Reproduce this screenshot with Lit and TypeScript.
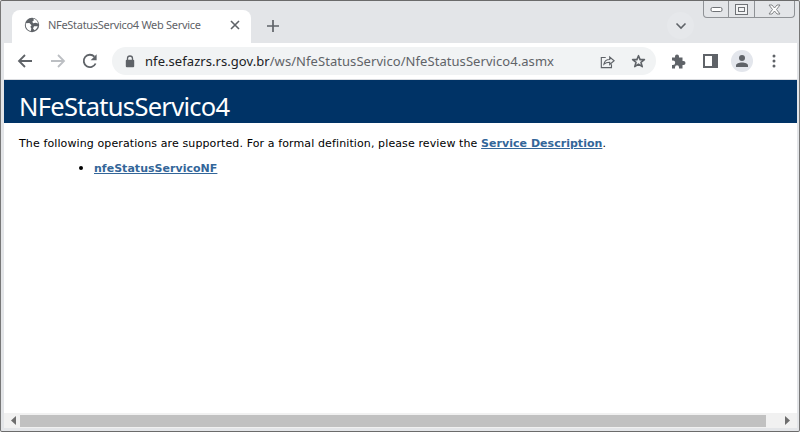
import { LitElement, html, css } from 'lit';
import { customElement } from 'lit/decorators.js';

@customElement('app-root')
export class AppRoot extends LitElement {
  static styles = css`
    :host {
      display: block;
      width: 800px;
      height: 432px;
      font-family: 'Noto Sans', sans-serif;
      overflow: hidden;
    }

    .window {
      position: relative;
      box-sizing: border-box;
      width: 800px;
      height: 432px;
      display: flex;
      flex-direction: column;
      background: #e3e5e8;
      border-top: 1px solid #6b6b6b;
      border-left: 1px solid #777;
      border-right: 1px solid #777;
      border-bottom: 1px solid #6b6b6b;
      border-radius: 2px;
      padding: 0 2px 3px 2px;
    }

    .strip {
      height: 42px;
      flex: none;
      display: flex;
      align-items: flex-end;
      background: #e3e5e8;
      padding-left: 9px;
    }

    .tab {
      width: 239px;
      height: 33px;
      box-sizing: border-box;
      display: flex;
      align-items: center;
      padding: 0 10px 4px 12px;
      background: #fff;
      border-radius: 8px 8px 0 0;
      color: #5f6368;
      font-size: 11px;
      flex: none;
    }

    .tab .label {
      margin-left: 8px;
      flex: 1;
      letter-spacing: -0.3px;
      white-space: nowrap;
    }

    .plus {
      margin-left: 15px;
      margin-bottom: 10px;
      display: flex;
    }

    .chevron {
      width: 27px;
      height: 27px;
      border-radius: 50%;
      background: #e6e8eb;
      margin-left: auto;
      margin-right: 103px;
      margin-bottom: 4px;
      display: flex;
      align-items: center;
      justify-content: center;
    }

    .toolbar {
      height: 36px;
      flex: none;
      display: flex;
      align-items: center;
      padding-left: 13px;
      background: #fff;
      border-bottom: 1px solid #dadce0;
      margin-left: 1px;
    }

    .nav {
      display: flex;
      gap: 17px;
      align-items: center;
    }

    .nav svg:last-child {
      margin-left: -1px;
    }

    .omnibox {
      margin-left: 14px;
      width: 544px;
      height: 28px;
      box-sizing: border-box;
      border-radius: 14px;
      background: #f1f3f4;
      display: flex;
      align-items: center;
      padding: 0 10px 0 13px;
      font-size: 13px;
      color: #5f6368;
      white-space: nowrap;
    }

    .omnibox .host {
      color: #202124;
    }

    .url {
      margin-left: 10px;
      letter-spacing: 0.06px;
    }

    .omni-icons {
      margin-left: auto;
      display: flex;
      gap: 16px;
      align-items: center;
    }

    .actions {
      display: flex;
      align-items: center;
      margin-left: 15px;
    }

    .panel-icon {
      margin-left: 16px;
    }

    .avatar {
      width: 22px;
      height: 22px;
      border-radius: 50%;
      background: #e3e6ec;
      display: flex;
      align-items: center;
      justify-content: center;
      margin: 0 19px 0 13px;
    }

    .page {
      flex: 1;
      min-height: 0;
      margin-left: 1px;
      display: flex;
      flex-direction: column;
      background: #fff;
    }

    .heading {
      height: 43px;
      flex: none;
      box-sizing: border-box;
      background: #003366;
      color: #fff;
      font-family: 'Noto Sans', sans-serif;
      font-size: 25.5px;
      line-height: 43px;
      padding: 5px 0 0 15px;
      letter-spacing: -0.7px;
      white-space: nowrap;
    }

    .body {
      flex: 1;
      padding: 13px 0 0 15px;
      font-family: 'DejaVu Sans', Verdana, sans-serif;
      font-size: 11px;
      line-height: 15px;
      color: #000;
      letter-spacing: 0.112px;
    }

    .body a {
      color: #336699;
      font-weight: bold;
      text-decoration: underline;
      letter-spacing: 0.03px;
    }

    ul {
      margin: 0;
      padding: 9px 0 0 75px;
      list-style: disc;
    }

    li::marker {
      font-size: 13px;
    }

    .scrollbar {
      height: 15px;
      flex: none;
      display: flex;
      align-items: center;
      background: #f1f1f1;
      padding: 0 7px;
    }

    .thumb {
      height: 12px;
      flex: 1;
      background: #c1c1c1;
      margin: 0 19px 0 4px;
    }

    .controls {
      position: absolute;
      top: 0;
      right: 4px;
      height: 17px;
      width: 92px;
      box-sizing: border-box;
      display: flex;
      border: 1px solid #8f9296;
      border-top: none;
      border-radius: 0 0 4px 4px;
    }

    .controls div {
      display: flex;
      align-items: center;
      justify-content: center;
      border-left: 1px solid #8f9296;
    }

    .controls div:first-child {
      border-left: none;
    }

    .ctl-min {
      width: 24px;
    }

    .ctl-max {
      width: 25px;
    }

    .ctl-close {
      flex: 1;
    }
  `;

  render() {
    return html`
      <div class="window">
        <div class="strip">
          <div class="tab">
            <svg width="16" height="16" viewBox="0 0 16 16">
              <circle cx="8" cy="8" r="7.200" fill="#5f6368" />
              <path
                d="M1.800 6.200 5.400 6l2.100 2.300-1.100 1.500.9 1.700-.5 2.500C4 13.600 1.800 11 1.800 8zM9.300 1.600l.6 1.700-1.700 1.500 1 1.400 2.300-.5 2.600.8c-.5-2.400-2.300-4.300-4.800-4.900zM10 9.300h3.700c-.4 1.700-1.500 3.100-3.100 3.900L9 11.500z"
                fill="#fff"
              />
            </svg>
            <span class="label">NFeStatusServico4 Web Service</span>
            <svg width="12" height="12" viewBox="0 0 12 12">
              <path d="M2 2l8 8M10 2l-8 8" stroke="#5f6368" stroke-width="1.600" />
            </svg>
          </div>
          <div class="plus">
            <svg width="14" height="14" viewBox="0 0 14 14">
              <path d="M7 1v12M1 7h12" stroke="#5f6368" stroke-width="1.700" />
            </svg>
          </div>
          <div class="chevron">
            <svg width="12" height="8" viewBox="0 0 12 8">
              <path d="M1.500 1.500 6 6l4.500-4.500" fill="none" stroke="#5f6368" stroke-width="1.600" />
            </svg>
          </div>
        </div>

        <div class="toolbar">
          <div class="nav">
            <svg width="16" height="16" viewBox="0 0 16 16">
              <path d="M15 8H2M8 2 2 8l6 6" fill="none" stroke="#5f6368" stroke-width="1.800" />
            </svg>
            <svg width="16" height="16" viewBox="0 0 16 16">
              <path d="M1 8h13M8 2l6 6-6 6" fill="none" stroke="#bcbfc3" stroke-width="1.800" />
            </svg>
            <svg width="16" height="16" viewBox="0 0 16 16">
              <path d="M13.600 10.500A6.200 6.200 0 1 1 12.400 3.600" fill="none" stroke="#5f6368" stroke-width="1.800" />
              <path d="M14.600 1.200v6h-6z" fill="#5f6368" />
            </svg>
          </div>
          <div class="omnibox">
            <svg width="10" height="13" viewBox="0 0 10 13">
              <path d="M2.500 5V3.500a2.500 2.500 0 0 1 5 0V5" fill="none" stroke="#5f6368" stroke-width="1.300" />
              <rect x="0.800" y="4.800" width="8.400" height="7.400" rx="1" fill="#5f6368" />
            </svg>
            <span class="url"><span class="host">nfe.sefazrs.rs.gov.br</span>/ws/NfeStatusServico/NfeStatusServico4.asmx</span>
            <div class="omni-icons">
              <svg width="15" height="15" viewBox="0 0 17 17">
                <path d="M6.500 4H1.500v11.500h11.500v-4" fill="none" stroke="#5f6368" stroke-width="1.300" />
                <path d="M4.500 11.500c.5-3.500 3-5.300 6.500-5.300V3.500l5 4.200-5 4.200V9.300c-3 0-5 .6-6.500 2.200z" fill="none" stroke="#5f6368" stroke-width="1.300" />
              </svg>
              <svg width="15" height="15" viewBox="0 0 16 16">
                <path d="M8 1.800 9.700 6h4.600l-3.700 2.900 1.400 4.600L8 10.800l-4 2.700 1.400-4.600L1.700 6h4.600z" fill="none" stroke="#5f6368" stroke-width="1.700" stroke-linejoin="round" />
              </svg>
            </div>
          </div>
          <div class="actions">
            <svg width="16" height="16" viewBox="0 0 16 16">
              <path d="M6 1.500a2 2 0 0 1 2 2V4.500h3.500V8h1a2 2 0 1 1 0 4h-1v3.500H8v-1.200a2 2 0 1 0-4 0v1.200H1V12h1a2.200 2.200 0 1 0 0-4.400H1V4.500h3V3.500a2 2 0 0 1 2-2z" fill="#5f6368" />
            </svg>
            <svg class="panel-icon" width="15" height="14" viewBox="0 0 15 14">
              <rect x="1" y="1" width="13" height="12" fill="none" stroke="#5f6368" stroke-width="2" />
              <rect x="9" y="1" width="5" height="12" fill="#5f6368" />
            </svg>
            <div class="avatar">
              <svg width="14" height="14" viewBox="0 0 14 14">
                <circle cx="7" cy="4" r="3" fill="#5f6368" />
                <path d="M1 13v-1.500C1 9.500 4 8.500 7 8.500s6 1 6 3V13z" fill="#5f6368" />
              </svg>
            </div>
            <svg width="4" height="14" viewBox="0 0 4 14">
              <circle cx="2" cy="2" r="1.500" fill="#5f6368" />
              <circle cx="2" cy="7" r="1.500" fill="#5f6368" />
              <circle cx="2" cy="12" r="1.500" fill="#5f6368" />
            </svg>
          </div>
        </div>

        <div class="page">
          <div class="heading">NFeStatusServico4</div>
          <div class="body">
            The following operations are supported. For a formal definition, please review the
            <a href="#">Service Description</a>.
            <ul>
              <li><a href="#">nfeStatusServicoNF</a></li>
            </ul>
          </div>
          <div class="scrollbar">
            <svg width="5" height="9" viewBox="0 0 5 9"><path d="M5 0v9L0 4.500z" fill="#6e6e6e" /></svg>
            <div class="thumb"></div>
            <svg width="5" height="9" viewBox="0 0 5 9"><path d="M0 0v9l5-4.500z" fill="#6e6e6e" /></svg>
          </div>
        </div>

        <div class="controls">
          <div class="ctl-min">
            <svg width="13" height="7" viewBox="0 0 13 7"><rect x="1" y="1.500" width="11" height="4" rx="1.500" fill="#fff" stroke="#6f7276" /></svg>
          </div>
          <div class="ctl-max">
            <svg width="13" height="11" viewBox="0 0 13 11">
              <rect x="0.500" y="0.500" width="12" height="10" fill="#f2f3f4" stroke="#6f7276" />
              <rect x="3.500" y="3.500" width="6" height="4" fill="none" stroke="#6f7276" />
            </svg>
          </div>
          <div class="ctl-close">
            <svg width="13" height="11" viewBox="0 0 13 11">
              <path d="M1 1h3l2.500 3L9 1h3L8.500 5.500 12 10H9L6.500 7 4 10H1l3.500-4.500z" fill="#fff" stroke="#77797c" stroke-width="0.900" />
            </svg>
          </div>
        </div>
      </div>
    `;
  }
}

declare global {
  interface HTMLElementTagNameMap {
    'app-root': AppRoot;
  }
}
